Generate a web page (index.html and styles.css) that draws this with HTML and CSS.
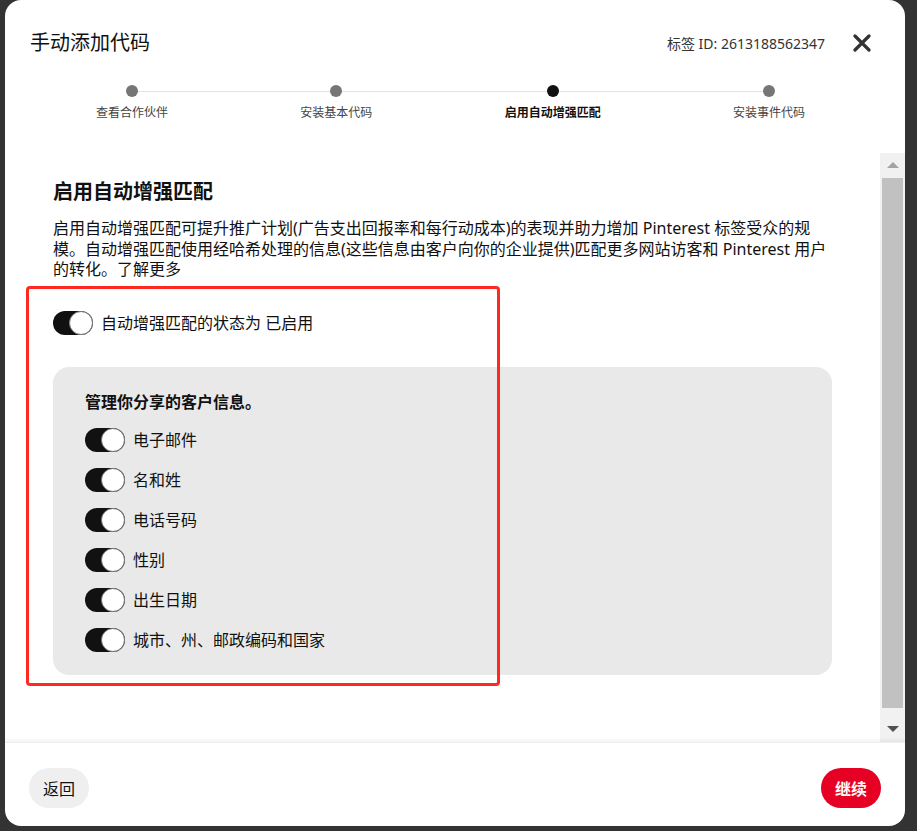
FILE: index.html
```html
<!DOCTYPE html>
<html lang="zh-CN">
<head>
    <meta charset="UTF-8">
    <meta name="viewport" content="width=device-width, initial-scale=1.0">
    <title>手动添加代码</title>
    <link rel="stylesheet" href="styles.css">
</head>
<body>

    <!-- Modal -->
    <div class="modal">

        <!-- Header with title and steps -->
        <div class="modal-header">
            <div class="title-row">
                <h1>手动添加代码</h1>
                <span class="tag-id">标签 ID: 2613188562347</span>
                <button class="close" aria-label="关闭">
                    <svg width="18" height="18" viewBox="0 0 18 18">
                        <path d="M2 2 L16 16 M16 2 L2 16" stroke="#333" stroke-width="3.2" stroke-linecap="round"/>
                    </svg>
                </button>
            </div>

            <ol class="steps">
                <li><span class="dot"></span><span class="step-label">查看合作伙伴</span></li>
                <li><span class="dot"></span><span class="step-label">安装基本代码</span></li>
                <li class="active"><span class="dot"></span><span class="step-label">启用自动增强匹配</span></li>
                <li><span class="dot"></span><span class="step-label">安装事件代码</span></li>
            </ol>
        </div>

        <!-- Scrolling body -->
        <div class="scroll-wrap">
            <div class="scroll-content">
                <h2>启用自动增强匹配</h2>
                <p class="intro">启用自动增强匹配可提升推广计划(广告支出回报率和每行动成本)的表现并助力增加 Pinterest 标签受众的规模。自动增强匹配使用经哈希处理的信息(这些信息由客户向你的企业提供)匹配更多网站访客和 Pinterest 用户的转化。<a href="#">了解更多</a></p>

                <label class="switch-row main-switch">
                    <span class="switch"><span class="knob"></span></span>
                    <span>自动增强匹配的状态为 已启用</span>
                </label>

                <div class="info-box">
                    <h3>管理你分享的客户信息。</h3>
                    <label class="switch-row"><span class="switch"><span class="knob"></span></span><span>电子邮件</span></label>
                    <label class="switch-row"><span class="switch"><span class="knob"></span></span><span>名和姓</span></label>
                    <label class="switch-row"><span class="switch"><span class="knob"></span></span><span>电话号码</span></label>
                    <label class="switch-row"><span class="switch"><span class="knob"></span></span><span>性别</span></label>
                    <label class="switch-row"><span class="switch"><span class="knob"></span></span><span>出生日期</span></label>
                    <label class="switch-row"><span class="switch"><span class="knob"></span></span><span>城市、州、邮政编码和国家</span></label>
                </div>
            </div>

            <div class="scrollbar">
                <span class="arrow up"></span>
                <span class="thumb"></span>
                <span class="arrow down"></span>
            </div>
        </div>

        <!-- Footer buttons -->
        <div class="modal-footer">
            <button class="btn btn-back">返回</button>
            <button class="btn btn-next">继续</button>
        </div>

        <!-- Red highlight annotation -->
        <div class="highlight"></div>
    </div>

</body>
</html>
```

FILE: styles.css
```css
/* Page */
body {
    margin: 0;
    padding: 0 12px 5px 5px;
    background-color: #333;
    font-family: "Noto Sans", "Noto Sans CJK SC", sans-serif;
    color: #111;
    height: 831px;
    box-sizing: border-box;
    overflow: hidden;
}

/* Modal */
.modal {
    position: relative;
    width: 900px;
    height: 826px;
    background-color: white;
    border-radius: 16px;
    display: flex;
    flex-direction: column;
    overflow: hidden;
}

.modal-header {
    padding: 29px 34px 32px 25px;
}

.title-row {
    display: flex;
    align-items: center;
    height: 28px;
}

.title-row h1 {
    margin: 0;
    font-size: 20px;
    font-weight: normal;
    line-height: 28px;
    flex: 1;
}

.tag-id {
    font-size: 14px;
    color: #333;
    margin-right: 28px;
}

.close {
    background: none;
    border: none;
    padding: 0;
    width: 18px;
    height: 18px;
    cursor: pointer;
    display: flex;
}

/* Steps */
.steps {
    position: relative;
    list-style: none;
    margin: 28px 66px 0 66px;
    padding: 0;
    display: flex;
    justify-content: space-between;
}

.steps::before {
    content: "";
    position: absolute;
    left: 36px;
    right: 36px;
    top: 6px;
    height: 1px;
    background-color: #e2e2e2;
}

.steps li {
    position: relative;
    display: flex;
    flex-direction: column;
    align-items: center;
}

.dot {
    width: 12px;
    height: 12px;
    border-radius: 50%;
    background-color: #767676;
}

.step-label {
    margin-top: 8px;
    font-size: 12px;
    line-height: 16px;
    color: #444;
}

.steps li.active .dot {
    background-color: #111;
}

.steps li.active .step-label {
    color: #111;
    font-weight: bold;
}

/* Scroll area */
.scroll-wrap {
    height: 589px;
    display: flex;
}

.scroll-content {
    flex: 1;
    overflow: hidden;
    padding: 26px 23px 0 48px;
}

.scroll-content h2 {
    margin: 0;
    font-size: 20px;
    line-height: 26px;
    font-weight: bold;
}

.intro {
    margin: 13px 0 0 0;
    max-width: 776px;
    font-size: 16px;
    line-height: 20.5px;
}

.intro a {
    color: #111;
    text-decoration: none;
}

/* Toggle switches */
.switch-row {
    display: flex;
    align-items: center;
    gap: 8px;
    font-size: 16px;
    line-height: 24px;
    height: 24px;
}

.main-switch {
    margin-top: 31px;
}

.switch {
    width: 40px;
    height: 24px;
    border-radius: 12px;
    background-color: #111;
    display: flex;
    justify-content: flex-end;
    flex-shrink: 0;
}

.knob {
    width: 24px;
    height: 24px;
    border-radius: 50%;
    background-color: white;
    border: 1px solid #767676;
    box-sizing: border-box;
}

.info-box {
    margin-top: 32px;
    width: 779px;
    box-sizing: border-box;
    background-color: #e9e9e9;
    border-radius: 16px;
    padding: 25px 32px 23px 32px;
    display: flex;
    flex-direction: column;
    gap: 16px;
}

.info-box h3 {
    margin: 0;
    font-size: 16px;
    line-height: 20px;
    font-weight: bold;
}

/* Fake scrollbar */
.scrollbar {
    width: 25px;
    background-color: #f1f1f1;
    display: flex;
    flex-direction: column;
    align-items: center;
}

.thumb {
    width: 21px;
    height: 530px;
    background-color: #c1c1c1;
}

.arrow {
    width: 0;
    height: 0;
    border-left: 6px solid transparent;
    border-right: 6px solid transparent;
}

.arrow.up {
    border-bottom: 6px solid #a3a3a3;
    margin-top: 9px;
    margin-bottom: 10px;
}

.arrow.down {
    border-top: 6px solid #505050;
    margin-top: auto;
    margin-bottom: 10px;
}

/* Footer */
.modal-footer {
    flex: 1;
    display: flex;
    justify-content: space-between;
    align-items: flex-start;
    padding: 25px 24px 0 24px;
    box-shadow: 0 -2px 4px rgba(0, 0, 0, 0.06);
    border-top: 1px solid #eee;
}

.btn {
    height: 40px;
    width: 60px;
    border: none;
    border-radius: 20px;
    font-family: "Noto Sans", "Noto Sans CJK SC", sans-serif;
    font-size: 16px;
    cursor: pointer;
}

.btn-back {
    background-color: #efefef;
    color: #111;
}

.btn-next {
    background-color: #e60023;
    color: white;
    font-weight: bold;
}

/* Annotation box drawn over the content */
.highlight {
    position: absolute;
    left: 21px;
    top: 286px;
    width: 474px;
    height: 400px;
    border: 3px solid #ff2a1f;
    border-radius: 4px;
    box-sizing: border-box;
}
```
